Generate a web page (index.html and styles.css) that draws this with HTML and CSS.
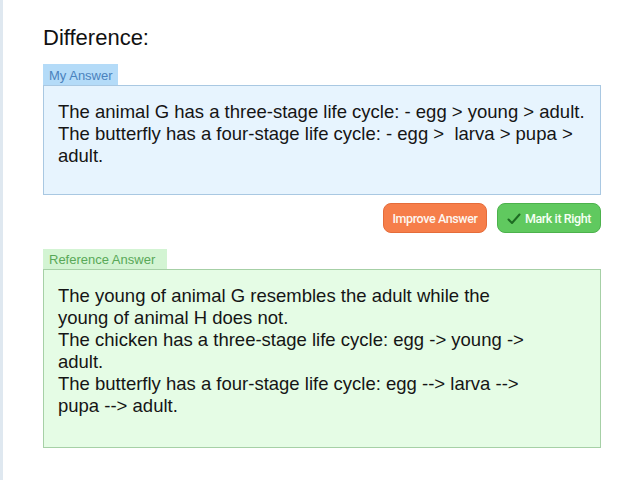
FILE: index.html
```html
<!DOCTYPE html>
<html>
<head>
<meta charset="utf-8">
<link rel="stylesheet" href="styles.css">
</head>
<body>
<div class="page">
  <h2 class="title">Difference:</h2>
  <div class="tab tab-mine">My Answer</div>
  <div class="box box-mine">The animal G has a three-stage life cycle: - egg &gt; young &gt; adult.<br>The butterfly has a four-stage life cycle: - egg &gt;&nbsp; larva &gt; pupa &gt;<br>adult.</div>
  <div class="actions">
    <button class="btn btn-improve">Improve Answer</button>
    <button class="btn btn-right"><svg class="check" width="14" height="12" viewBox="0 0 14 12"><path d="M1.5 6.5 L5 10 L12.5 1.5" fill="none" stroke="#1d6b22" stroke-width="2" stroke-linecap="round" stroke-linejoin="round"/></svg>Mark it Right</button>
  </div>
  <div class="tab tab-ref">Reference Answer</div>
  <div class="box box-ref">The young of animal G resembles the adult while the<br>young of animal H does not.<br>The chicken has a three-stage life cycle: egg -&gt; young -&gt;<br>adult.<br>The butterfly has a four-stage life cycle: egg --&gt; larva --&gt;<br>pupa --&gt; adult.</div>
</div>
</body>
</html>
```
FILE: styles.css
```css
html, body {
  margin: 0;
  padding: 0;
  background: #ffffff;
}
body {
  font-family: "Liberation Sans", Arial, sans-serif;
  color: #151515;
}
.page {
  border-left: 3px solid #dfe8f0;
  min-height: 480px;
  box-sizing: border-box;
  padding: 26px 39px 0 40px;
  width: 640px;
}
.title {
  margin: 0 0 14px 0;
  font-size: 22px;
  line-height: 24px;
  font-weight: normal;
  color: #111;
}
.tab {
  display: inline-block;
  font-size: 13px;
  line-height: 19px;
  height: 21px;
  box-sizing: border-box;
  padding: 2px 6px 0 6px;
  vertical-align: top;
}
.tab-mine {
  background: #b4dbf8;
  color: #4a82bd;
  padding-right: 5px;
}
.tab-ref {
  background: #d3f4d3;
  color: #58a858;
  height: 20px;
  line-height: 18px;
  padding-right: 12px;
}
.box {
  box-sizing: border-box;
  width: 558px;
  font-size: 18.5px;
  line-height: 22px;
  padding: 15px 14px 13px 14px;
  color: #151515;
}
.box-mine {
  background: #e7f4fe;
  border: 1px solid #a9c8e2;
  height: 110px;
}
.box-ref {
  background: #e5fce5;
  border: 1px solid #a6d0a6;
  height: 179px;
}
.actions {
  width: 558px;
  display: flex;
  justify-content: flex-end;
  gap: 10px;
  margin: 8px 0 16px 0;
}
.btn {
  box-sizing: border-box;
  width: 104px;
  height: 30px;
  border-radius: 8px;
  font-family: Roboto, "Liberation Sans", sans-serif;
  font-size: 12.5px;
  font-weight: 500;
  color: #fdf6f0;
  display: flex;
  align-items: center;
  justify-content: center;
  gap: 4px;
  padding: 1px 0 0 0;
  letter-spacing: -0.4px;
}
.btn-improve {
  background: #f67e4a;
  border: 1px solid #e56c3a;
}
.btn-right {
  background: #60c95f;
  border: 1px solid #4cb24c;
  color: #f6fff4;
}
.check {
  display: block;
}
```
